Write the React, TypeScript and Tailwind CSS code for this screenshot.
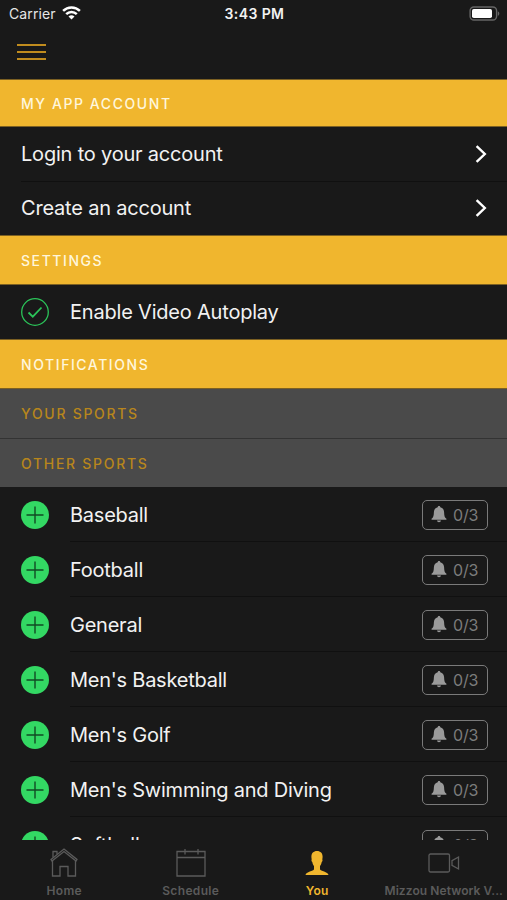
import type { ReactNode } from "react";
import clsx from "clsx";

const sports = [
  "Baseball",
  "Football",
  "General",
  "Men's Basketball",
  "Men's Golf",
  "Men's Swimming and Diving",
  "Softball",
];

function StatusBar() {
  return (
    <div className="grid h-[27px] grid-cols-3 items-center pl-[9px] pr-[7px] text-[14px] text-[#e6e6e6]">
      <div className="flex items-center gap-[6px]">
        <span className="tracking-[0.1px]">Carrier</span>
        <svg className="mt-[-1px]" width="19" height="14" viewBox="0 0 19 14" fill="none" stroke="#fff" strokeWidth="2.5">
          <path d="M1.1 4.9a12 12 0 0 1 16.8 0" />
          <path d="M4.2 8.1a7.6 7.6 0 0 1 10.6 0" />
          <path d="M9.5 13.6 6.5 10.6a4.3 4.3 0 0 1 6 0z" fill="#fff" stroke="none" />
        </svg>
      </div>
      <span className="text-center font-semibold tracking-[0.4px] text-[#f2f2f2]">3:43 PM</span>
      <svg className="mt-[-1px] justify-self-end" width="31" height="15" viewBox="0 0 31 15">
        <rect x="1.1" y="1" width="26.5" height="13" rx="3.8" fill="none" stroke="#666" strokeWidth="1.4" />
        <rect x="3" y="2.9" width="20" height="9.2" rx="1.8" fill="#fff" />
        <path d="M28.8 5.2c2 .8 2 3.8 0 4.6z" fill="#666" />
      </svg>
    </div>
  );
}

function SectionHeader({ title, className }: { title: string; className: string }) {
  return (
    <h2 className={clsx("flex shrink-0 items-center pl-[21px] text-[14px] font-medium", className)}>
      {title}
    </h2>
  );
}

function AccountRow({ label }: { label: string }) {
  return (
    <button className="flex flex-1 items-center justify-between pl-[21px] pr-[20px] text-left text-[20px] tracking-[-0.2px]">
      {label}
      <svg width="12" height="18" viewBox="0 0 12 18" fill="none" stroke="#fff" strokeWidth="2.4">
        <path d="m1.6 1.2 8.2 7.8-8.2 7.8" />
      </svg>
    </button>
  );
}

function PlusIcon() {
  return (
    <svg width="28" height="28" viewBox="0 0 28 28">
      <circle cx="14" cy="14" r="14" fill="#33d863" />
      <path d="M14 5.5v17M5.5 14h17" stroke="#124a24" strokeWidth="1.4" />
    </svg>
  );
}

function AlertCount() {
  return (
    <div className="flex h-[30px] w-[66px] items-center rounded-[5px] border-[1.5px] border-[#7a7a7a] pl-[8px] text-[16px] tracking-[-0.2px] text-[#7c7c7c]">
      <svg width="16" height="17" viewBox="0 0 16 17" fill="#9a9a9a">
        <path d="M8 0c.8 0 1.2.5 1.3 1.2 2.4.6 3.7 2.4 3.8 5 .1 3.5.5 5.3 2.3 6.6.4.4.2.9-.4.9H1c-.6 0-.8-.5-.4-.9 1.8-1.3 2.2-3.1 2.3-6.6.1-2.6 1.4-4.4 3.8-5C6.800.5 7.200 0 8 0zM6 14.6h4c-.2 1-.9 1.7-2 1.7s-1.8-.7-2-1.7z" />
      </svg>
      <span className="ml-[6px]">0/3</span>
    </div>
  );
}

function SportRow({ name }: { name: string }) {
  return (
    <div className="flex h-[55px] shrink-0 pl-[21px]">
      <div className="flex w-[49px] items-center">
        <PlusIcon />
      </div>
      <div className="flex flex-1 items-center justify-between border-b border-[#101010] pr-[19px] pt-px text-[20px] tracking-[-0.24px]">
        {name}
        <AlertCount />
      </div>
    </div>
  );
}

function Tab({ label, active, children }: { label: ReactNode; active?: boolean; children: ReactNode }) {
  return (
    <div className={clsx("flex w-1/4 flex-col items-center", active ? "text-[#f0b62e]" : "text-[#5b5b5b]")}>
      <div className="flex h-[43px] items-center pt-[3px]">{children}</div>
      <span className="whitespace-nowrap text-[12px] font-semibold leading-[16px] tracking-[0.35px]">{label}</span>
    </div>
  );
}

export default function App() {
  return (
    <div className="flex h-[900px] w-[507px] flex-col overflow-hidden bg-[#191919] font-['Inter',sans-serif] text-[#f2f2f2]">
      <header className="h-[79px] shrink-0">
        <StatusBar />
        <button className="ml-[17px] mt-[17px] flex w-[29px] flex-col gap-[5px]">
          <span className="h-[2px] w-full bg-[#c08c1e]" />
          <span className="h-[2px] w-full bg-[#c08c1e]" />
          <span className="h-[2px] w-full bg-[#c08c1e]" />
        </button>
      </header>

      <main className="flex min-h-0 flex-1 flex-col overflow-hidden">
        <SectionHeader
          title="MY APP ACCOUNT"
          className="h-[48px] border-y border-[#7c6022] bg-[#f0b62e] tracking-[1.57px] text-[#fff6dc]"
        />
        <div className="flex h-[108px] shrink-0 flex-col">
          <AccountRow label="Login to your account" />
          <div className="ml-[21px] h-px bg-[#101010]" />
          <AccountRow label="Create an account" />
        </div>
        <SectionHeader
          title="SETTINGS"
          className="h-[50px] border-y border-[#7c6022] bg-[#f0b62e] tracking-[1.57px] text-[#fff6dc]"
        />
        <div className="flex h-[54px] shrink-0 items-center pl-[21px] text-[20px] tracking-[-0.2px]">
          <svg className="mr-[21px]" width="28" height="28" viewBox="0 0 28 28" fill="none" stroke="#2bc459">
            <circle cx="14" cy="14" r="13.3" strokeWidth="1.3" />
            <path d="m7.5 14.5 4.3 4.2 8.7-9.2" strokeWidth="1.8" />
          </svg>
          Enable Video Autoplay
        </div>
        <SectionHeader
          title="NOTIFICATIONS"
          className="h-[50px] border-y border-[#7c6022] bg-[#f0b62e] tracking-[1.57px] text-[#fff6dc]"
        />
        <SectionHeader
          title="YOUR SPORTS"
          className="h-[50px] border-b border-[#333] bg-[#4a4a4a] tracking-[1.7px] text-[#b8861c]"
        />
        <SectionHeader title="OTHER SPORTS" className="h-[48px] bg-[#4a4a4a] tracking-[1.7px] text-[#b8861c]" />
        {sports.map((name) => (
          <SportRow key={name} name={name} />
        ))}
      </main>

      <nav className="flex h-[60px] shrink-0 pl-px">
        <Tab label="Home">
          <svg width="28" height="30" viewBox="0 0 28 30" fill="none" stroke="currentColor" strokeWidth="1.3">
            <path d="M1 11.5 14 1l13 10.5-1 1.5L14 3.5 2 13z" />
            <path d="M2.500 13v15H10V18.500h8V28h7.500V13M3 9.500V3.500h4v2.800" />
          </svg>
        </Tab>
        <Tab label="Schedule">
          <svg width="30" height="30" viewBox="0 0 30 30" fill="none" stroke="currentColor" strokeWidth="1.3">
            <path d="M1 3.500h28v24.500H1zM1 9.500h28M9 1v5.500M22 1v5.500" />
          </svg>
        </Tab>
        <Tab label="You" active>
          <svg width="24" height="25" viewBox="0 0 24 25" fill="currentColor">
            <path d="M12 0c3.500 0 5.600 2.200 5.600 5.600 0 1-.1 1.800-.3 2.700.5.9.2 2.200-.6 2.800-.3 1.800-.8 3-1.700 3.900v3.200c.4 1.900 7.900 2.200 8.500 5.800H.5c.6-3.600 8.100-3.900 8.500-5.800V15c-.9-.9-1.400-2.100-1.700-3.900-.8-.6-1.100-1.900-.6-2.800-.2-.9-.3-1.700-.3-2.700C6.400 2.200 8.500 0 12 0z" />
          </svg>
        </Tab>
        <Tab label={<span className="tracking-[0.08px]">Mizzou Network V...</span>}>
          <svg width="32" height="20" viewBox="0 0 32 20" fill="none" stroke="currentColor" strokeWidth="1.3">
            <rect x="1" y="1" width="20.5" height="18" rx="1.5" />
            <path d="m30.500 4-6.500 3.700v4.600l6.500 3.700z" />
          </svg>
        </Tab>
      </nav>
    </div>
  );
}
